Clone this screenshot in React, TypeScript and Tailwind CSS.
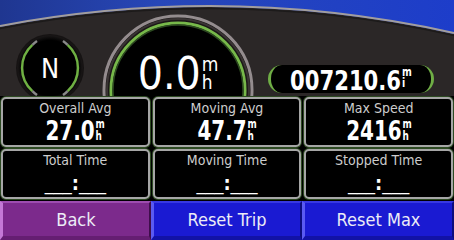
import React from "react";

const FONT = "font-['DejaVu_Sans_Condensed','DejaVu_Sans',sans-serif]";

function Compass() {
  return (
    <div className="relative w-[70px] h-[70px] ml-[15px] mt-[33px] shrink-0">
      <svg width="70" height="70" viewBox="0 0 70 70" className="absolute inset-0">
        <defs>
          <radialGradient id="cg" cx="50%" cy="50%" r="50%">
            <stop offset="85%" stopColor="#000" />
            <stop offset="100%" stopColor="#1a1717" />
          </radialGradient>
        </defs>
        <circle cx="35" cy="35" r="34" fill="#161313" />
        <circle cx="35" cy="35" r="32.5" fill="url(#cg)" />
        <path d="M 17.4 11.9 A 31 31 0 0 0 17.4 58.1" fill="none" stroke="#6fb043" strokeWidth="2.5" />
        <path d="M 52.6 11.9 A 31 31 0 0 1 52.6 58.1" fill="none" stroke="#6fb043" strokeWidth="2.5" />
        <path d="M 22.0 8.0 A 31 31 0 0 0 17.4 11.9" fill="none" stroke="#8a8a8a" strokeWidth="2.5" />
        <path d="M 48.0 8.0 A 31 31 0 0 1 52.6 11.9" fill="none" stroke="#8a8a8a" strokeWidth="2.5" />
        <path d="M 22.0 62.0 A 31 31 0 0 1 17.4 58.1" fill="none" stroke="#8a8a8a" strokeWidth="2.5" />
        <path d="M 48.0 62.0 A 31 31 0 0 0 52.6 58.1" fill="none" stroke="#8a8a8a" strokeWidth="2.5" />
      </svg>
      <div className="relative flex h-full items-center justify-center text-[27px] leading-none text-white">N</div>
    </div>
  );
}

function Speedo() {
  return (
    <div className="relative w-[152px] h-[152px] ml-[17px] mt-[14px] shrink-0">
      <svg width="152" height="152" viewBox="0 0 152 152" className="absolute inset-0">
        <circle cx="76" cy="76" r="74" fill="#1c1818" stroke="#948c8e" strokeWidth="3" />
        <circle cx="76" cy="76" r="71" fill="none" stroke="#3a3434" strokeWidth="2" />
        <circle cx="76" cy="76" r="67" fill="#000" stroke="#77b84a" strokeWidth="3" />
        <circle cx="76" cy="76" r="65" fill="none" stroke="#2c4a20" strokeWidth="1.5" />
      </svg>
      <div className="relative flex justify-center pt-[38px] text-white">
        <span className="text-[44px] leading-[44px]">0.0</span>
        <span className="flex flex-col ml-[1px] mt-[3px] text-[19px] leading-[18px]">
          <span>m</span>
          <span>h</span>
        </span>
      </div>
    </div>
  );
}

function Odometer() {
  return (
    <div className="ml-[14px] mt-[65px] w-[166px] h-[28px] shrink-0 rounded-full bg-black border-x-[3px] border-y-0 border-[#6fae45] flex justify-center">
      <div className="flex scale-x-[0.87] text-white font-bold pt-[2px]">
        <span className="text-[27px] leading-[27px]">007210.6</span>
        <span className="flex flex-col ml-[1px] text-[12px] leading-[11px]">
          <span>m</span>
          <span>i</span>
        </span>
      </div>
    </div>
  );
}

function Cell({ label, children }: { label: string; children: React.ReactNode }) {
  return (
    <div className="flex flex-col items-center rounded-[5px] border-2 border-[#a6a6a6] bg-black shadow-[0_0_0_1px_#2d4a22]">
      <div className="mt-[1px] text-[14px] leading-[16px] text-[#cdcdcd]">{label}</div>
      {children}
    </div>
  );
}

function SpeedValue({ v }: { v: string }) {
  return (
    <div className="mt-[1px] flex scale-x-[0.82] text-white font-bold">
      <span className="text-[27px] leading-[27px]">{v}</span>
      <span className="flex flex-col ml-[1px] mt-[1px] text-[12px] leading-[12px]">
        <span>m</span>
        <span>h</span>
      </span>
    </div>
  );
}

function TimeValue() {
  return (
    <div className="mt-[5px] flex text-[20px] leading-[20px] text-white">
      <span>___</span>
      <span className="font-bold">:</span>
      <span>___</span>
    </div>
  );
}

export default function App() {
  return (
    <div className={`w-[454px] h-[240px] overflow-hidden bg-black ${FONT}`}>
      <div className="relative h-[96px] overflow-hidden">
        <svg width="454" height="96" viewBox="0 0 454 96" className="absolute inset-0">
          <defs>
            <linearGradient id="bl" x1="0" y1="0" x2="1" y2="0">
              <stop offset="0" stopColor="#1f3690" />
              <stop offset="0.35" stopColor="#2747b8" />
              <stop offset="1" stopColor="#1d3dca" />
            </linearGradient>
          </defs>
          <rect width="454" height="96" fill="url(#bl)" />
          <path d="M0,27 Q227,-16 454,34 L454,96 L0,96 Z" fill="#2b2727" />
          <path d="M0,26 Q227,-17 454,33" fill="none" stroke="#a29e9e" strokeWidth="2" />
          <path d="M0,28.5 Q227,-14.5 454,35.5" fill="none" stroke="#1c1a1a" strokeWidth="1.5" />
        </svg>
        <div className="relative flex items-start">
          <Compass />
          <Speedo />
          <Odometer />
        </div>
      </div>
      <div className="grid grid-cols-3 grid-rows-[50px_50px] gap-x-[3px] gap-y-[2px] px-[1px] pt-[1px]">
        <Cell label="Overall Avg"><SpeedValue v="27.0" /></Cell>
        <Cell label="Moving Avg"><SpeedValue v="47.7" /></Cell>
        <Cell label="Max Speed"><SpeedValue v="2416" /></Cell>
        <Cell label="Total Time"><TimeValue /></Cell>
        <Cell label="Moving Time"><TimeValue /></Cell>
        <Cell label="Stopped Time"><TimeValue /></Cell>
      </div>
      <div className="mt-[2px] flex h-[39px] text-[18px] text-[#ececf6]">
        <div className="w-[151px] flex items-center justify-center bg-[#7c2a8c] border-l-[3px] border-l-[#c478d6] border-t-[2px] border-t-[#9e4cb0] border-r-[2px] border-r-[#3e0e4a] border-b-[4px] border-b-[#651e72]">Back</div>
        <div className="w-[151px] flex items-center justify-center bg-[#1a1ad2] border-l-[3px] border-l-[#5a5af2] border-t-[2px] border-t-[#3838e2] border-r-[2px] border-r-[#0c0c7e] border-b-[4px] border-b-[#1212a6]">Reset Trip</div>
        <div className="flex-1 flex items-center justify-center bg-[#1a1ad2] border-l-[3px] border-l-[#5a5af2] border-t-[2px] border-t-[#3838e2] border-r-[2px] border-r-[#0c0c7e] border-b-[4px] border-b-[#1212a6]">Reset Max</div>
      </div>
    </div>
  );
}
